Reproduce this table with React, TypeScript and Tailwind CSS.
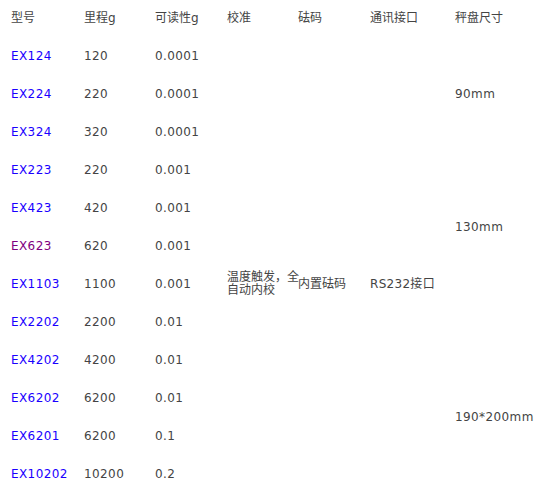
const rows = [
  { model: 'EX124', cap: '120', read: '0.0001' },
  { model: 'EX224', cap: '220', read: '0.0001' },
  { model: 'EX324', cap: '320', read: '0.0001' },
  { model: 'EX223', cap: '220', read: '0.001' },
  { model: 'EX423', cap: '420', read: '0.001' },
  { model: 'EX623', cap: '620', read: '0.001', visited: true },
  { model: 'EX1103', cap: '1100', read: '0.001' },
  { model: 'EX2202', cap: '2200', read: '0.01' },
  { model: 'EX4202', cap: '4200', read: '0.01' },
  { model: 'EX6202', cap: '6200', read: '0.01' },
  { model: 'EX6201', cap: '6200', read: '0.1' },
  { model: 'EX10202', cap: '10200', read: '0.2' },
]

const headers = ['型号', '里程g', '可读性g', '校准', '砝码', '通讯接口', '秤盘尺寸']

export default function App() {
  return (
    <div
      className="bg-white w-[556px] h-[480px] overflow-hidden text-[12px] text-[#444]"
      style={{ fontFamily: '"DejaVu Sans", "Noto Sans CJK SC", sans-serif' }}
    >
      <div className="grid grid-cols-[84px_71px_72px_71px_72px_85px_101px] grid-rows-[37px_repeat(12,38px)] leading-[13px]">
        {headers.map((h, i) => (
          <div key={h} className={`flex items-center pb-[1px] ${i === 0 ? 'pl-[11px]' : ''}`} style={{ gridColumn: i + 1, gridRow: 1 }}>
            {h}
          </div>
        ))}

        {rows.map((r, i) => (
          <div key={r.model} className="contents">
            <div
              className={`flex items-center pl-[11px] tracking-[0.4px] ${r.visited ? 'text-[#800080]' : 'text-[#1a00ff]'}`}
              style={{ gridColumn: 1, gridRow: i + 2 }}
            >
              {r.model}
            </div>
            <div className="flex items-center tracking-[0.4px]" style={{ gridColumn: 2, gridRow: i + 2 }}>{r.cap}</div>
            <div className="flex items-center tracking-[0.4px]" style={{ gridColumn: 3, gridRow: i + 2 }}>{r.read}</div>
          </div>
        ))}

        <div className="col-start-4 row-start-8 flex items-center">
          <span className="w-[75px] shrink-0">温度触发，全自动内校</span>
        </div>
        <div className="col-start-5 row-start-8 flex items-center">内置砝码</div>
        <div className="col-start-6 row-start-8 flex items-center tracking-[0.3px]">RS232接口</div>

        <div className="col-start-7 row-start-2 row-span-3 flex items-center tracking-[0.4px]">90mm</div>
        <div className="col-start-7 row-start-5 row-span-4 flex items-center tracking-[0.4px]">130mm</div>
        <div className="col-start-7 row-start-10 row-span-4 flex items-center tracking-[0.4px]">190*200mm</div>
      </div>
    </div>
  )
}
